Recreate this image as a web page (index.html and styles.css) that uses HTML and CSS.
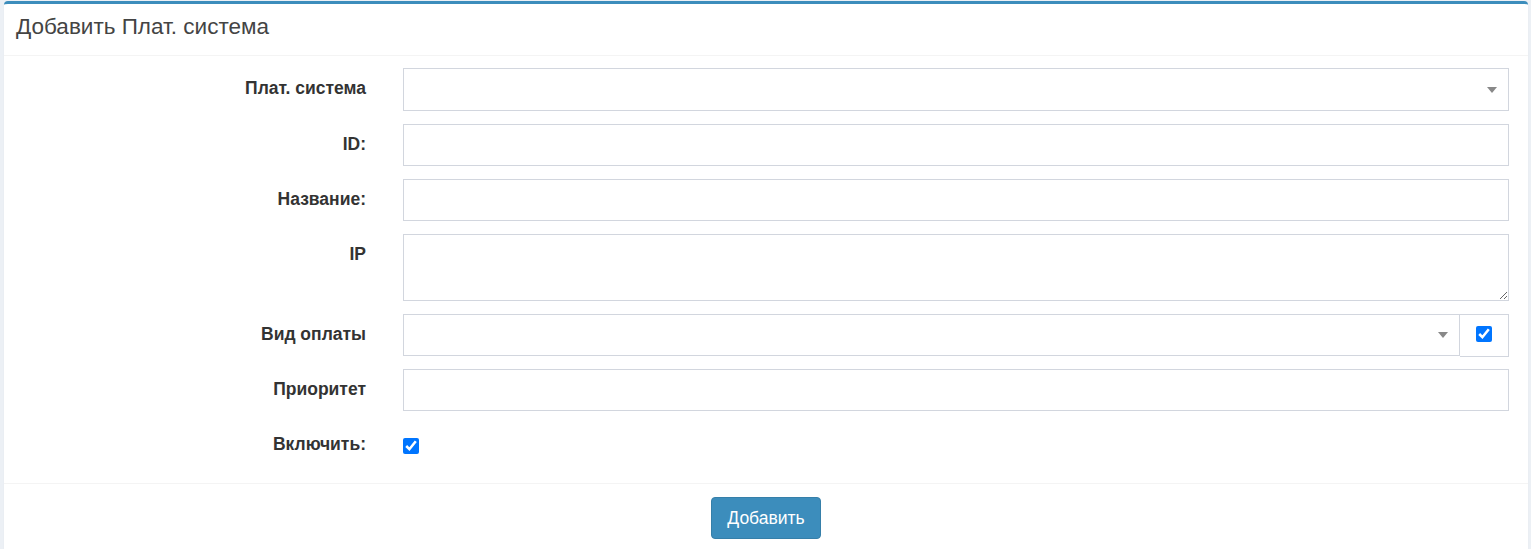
FILE: index.html
```html
<!DOCTYPE html>
<html lang="ru">
<head>
<meta charset="utf-8">
<title>Добавить Плат. система</title>
<link rel="stylesheet" href="styles.css">
</head>
<body>
<div class="page">
  <div class="box">
    <div class="box-header">
      <h3 class="box-title">Добавить Плат. система</h3>
    </div>
    <form class="box-body">
      <div class="form-row">
        <label class="control-label">Плат. система</label>
        <div class="control">
          <div class="select select-first"><span class="arrow"></span></div>
        </div>
      </div>
      <div class="form-row">
        <label class="control-label">ID:</label>
        <div class="control"><input class="input" type="text"></div>
      </div>
      <div class="form-row">
        <label class="control-label">Название:</label>
        <div class="control"><input class="input" type="text"></div>
      </div>
      <div class="form-row">
        <label class="control-label">IP</label>
        <div class="control"><textarea class="textarea"></textarea></div>
      </div>
      <div class="form-row">
        <label class="control-label">Вид оплаты</label>
        <div class="control input-group">
          <div class="select select-grow"><span class="arrow"></span></div>
          <span class="addon"><input class="check" type="checkbox" checked></span>
        </div>
      </div>
      <div class="form-row">
        <label class="control-label">Приоритет</label>
        <div class="control"><input class="input" type="text"></div>
      </div>
      <div class="form-row form-row-last">
        <label class="control-label">Включить:</label>
        <div class="control control-check"><input class="check" type="checkbox" checked></div>
      </div>
    </form>
    <div class="box-footer">
      <button class="btn" type="button">Добавить</button>
    </div>
  </div>
</div>
</body>
</html>
```

FILE: styles.css
```css
html, body {
  margin: 0;
  padding: 0;
  background: #ecf0f5;
  font-family: "Liberation Sans", Arial, sans-serif;
  color: #333;
}

.page {
  padding: 1px 3px 0 4px;
}

.box {
  background: #fff;
  border-top: 3px solid #3c8dbc;
  border-radius: 4px 4px 0 0;
  box-shadow: 0 1px 1px rgba(0, 0, 0, 0.1);
}

.box-header {
  padding: 10px 12px 15px;
  border-bottom: 1px solid #f4f4f4;
}

.box-title {
  margin: 0;
  font-size: 22.5px;
  font-weight: normal;
  line-height: 26px;
  color: #444;
}

.box-body {
  margin: 0;
  padding: 12px 19px 4px 0;
}

.form-row {
  display: grid;
  grid-template-columns: 362px 1fr;
  column-gap: 37px;
  margin-bottom: 13px;
}

.form-row-last {
  min-height: 42px;
}

.control-label {
  text-align: right;
  font-weight: bold;
  font-size: 17.5px;
  line-height: 25px;
  padding-top: 8px;
  color: #333;
}

.control {
  display: flex;
}

.input,
.textarea,
.select {
  box-sizing: border-box;
  width: 100%;
  border: 1px solid #d2d6de;
  background: #fff;
  font-family: inherit;
  font-size: 17.5px;
  margin: 0;
  border-radius: 0;
  outline: none;
}

.input {
  height: 42px;
}

.textarea {
  height: 67px;
  resize: vertical;
  display: block;
}

.select {
  height: 42px;
  display: flex;
  align-items: center;
  justify-content: flex-end;
  padding-right: 11px;
}

.select-first {
  height: 43px;
  padding-top: 1px;
}

.arrow {
  width: 0;
  height: 0;
  border-style: solid;
  border-width: 6px 5px 0 5px;
  border-color: #888 transparent transparent transparent;
}

.input-group {
  align-items: flex-start;
  height: 42px;
}

.select-grow {
  flex: 1;
  width: auto;
}

.addon {
  box-sizing: border-box;
  width: 49px;
  height: 43px;
  flex: none;
  border: 1px solid #d2d6de;
  border-left: 0;
  display: flex;
  align-items: center;
  justify-content: center;
  padding-bottom: 3px;
}

.check {
  width: 16px;
  height: 16px;
  margin: 0;
}

.control-check {
  padding-top: 14px;
  align-items: flex-start;
}

.box-footer {
  border-top: 1px solid #f4f4f4;
  padding: 13px 10px 10px;
  display: flex;
  justify-content: center;
}

.btn {
  box-sizing: border-box;
  height: 42px;
  width: 110px;
  background: #3c8dbc;
  border: 1px solid #367fa9;
  border-radius: 4px;
  color: #fff;
  font-family: "Liberation Sans", Arial, sans-serif;
  font-size: 17.5px;
  padding: 0;
}
```
